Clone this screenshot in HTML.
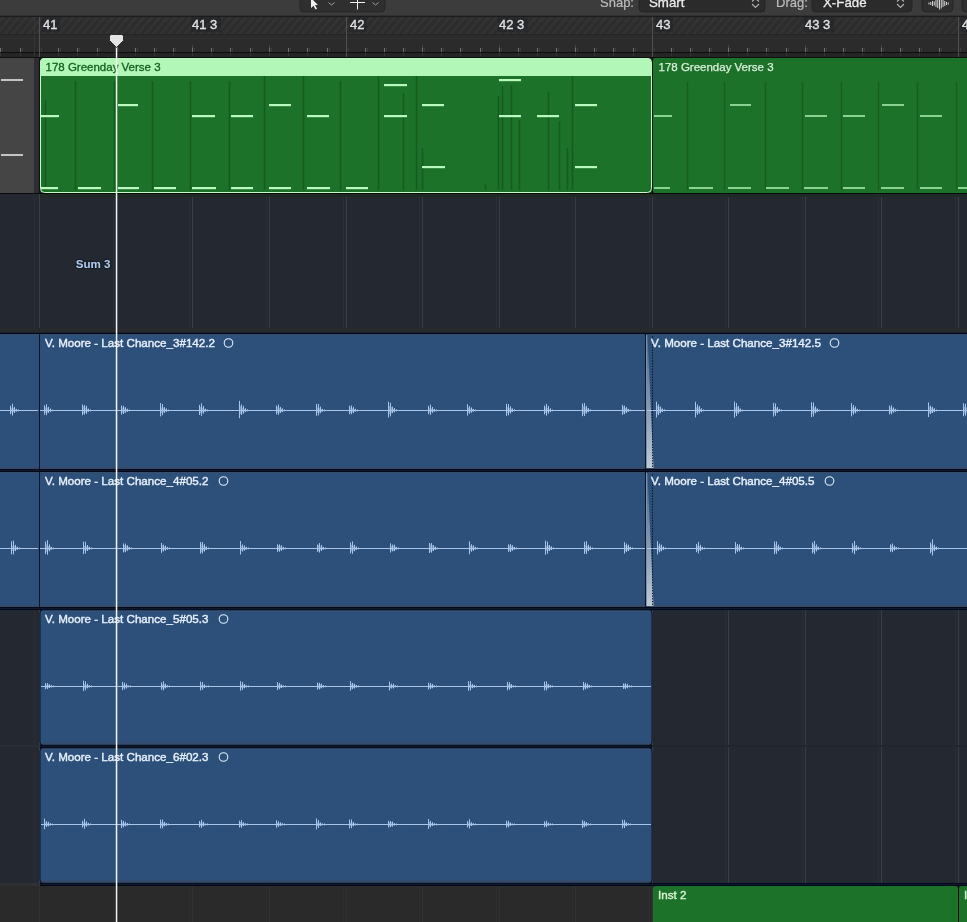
<!DOCTYPE html>
<html><head><meta charset="utf-8"><title>Logic Tracks</title>
<style>
*{margin:0;padding:0;box-sizing:border-box}
html,body{width:967px;height:922px;overflow:hidden;background:#262a31}
body{position:relative;font-family:"Liberation Sans",sans-serif}
svg text{font-family:"Liberation Sans",sans-serif}
</style></head><body>
<svg width="967" height="922" viewBox="0 0 967 922" style="position:absolute;left:0;top:0;display:block;will-change:transform" font-family="Liberation Sans, sans-serif"><rect x="0" y="0" width="967" height="922" fill="#242831" />
<rect x="0" y="0" width="967" height="16" fill="#3c3c3c" />
<rect x="0" y="15" width="967" height="1" fill="#303030" />
<defs><pattern id="st" patternUnits="userSpaceOnUse" width="6" height="9" patternTransform="rotate(40)"><rect width="6" height="9" fill="#2c2c2c"/><rect width="2.6" height="9" fill="#333333"/></pattern><linearGradient id="xf" x1="0" y1="0" x2="0" y2="1"><stop offset="0" stop-color="#a8b6c8" stop-opacity="0.25"/><stop offset="1" stop-color="#c8d0da" stop-opacity="0.95"/></linearGradient></defs>
<rect x="0" y="16" width="967" height="1" fill="#1c1c1c" />
<rect x="0" y="17" width="967" height="17" fill="url(#st)" />
<rect x="0" y="34" width="967" height="1" fill="#232323" />
<rect x="0" y="35" width="967" height="17" fill="#2b2b2b" />
<rect x="0" y="38" width="967" height="1" fill="#303030" />
<rect x="0" y="52" width="967" height="1" fill="#0f0f0f" />
<rect x="0" y="53" width="967" height="4" fill="#232623" />
<rect x="0" y="57" width="967" height="1" fill="#0f0f0f" />
<rect x="0" y="48" width="1" height="4" fill="#707070" />
<rect x="2" y="48" width="1" height="4" fill="#3c3c3c" />
<rect x="0" y="53" width="1" height="3" fill="#363636" />
<rect x="20" y="48" width="1" height="4" fill="#707070" />
<rect x="22" y="48" width="1" height="4" fill="#3c3c3c" />
<rect x="20" y="53" width="1" height="3" fill="#363636" />
<rect x="39" y="45" width="1" height="3" fill="#4a4a4a" />
<rect x="39" y="48" width="1" height="4" fill="#707070" />
<rect x="41" y="48" width="1" height="4" fill="#3c3c3c" />
<rect x="39" y="53" width="1" height="3" fill="#363636" />
<rect x="58" y="48" width="1" height="4" fill="#707070" />
<rect x="60" y="48" width="1" height="4" fill="#3c3c3c" />
<rect x="58" y="53" width="1" height="3" fill="#363636" />
<rect x="77" y="48" width="1" height="4" fill="#707070" />
<rect x="79" y="48" width="1" height="4" fill="#3c3c3c" />
<rect x="77" y="53" width="1" height="3" fill="#363636" />
<rect x="97" y="48" width="1" height="4" fill="#707070" />
<rect x="99" y="48" width="1" height="4" fill="#3c3c3c" />
<rect x="97" y="53" width="1" height="3" fill="#363636" />
<rect x="116" y="45" width="1" height="3" fill="#4a4a4a" />
<rect x="116" y="48" width="1" height="4" fill="#707070" />
<rect x="118" y="48" width="1" height="4" fill="#3c3c3c" />
<rect x="116" y="53" width="1" height="3" fill="#363636" />
<rect x="135" y="48" width="1" height="4" fill="#707070" />
<rect x="137" y="48" width="1" height="4" fill="#3c3c3c" />
<rect x="135" y="53" width="1" height="3" fill="#363636" />
<rect x="154" y="48" width="1" height="4" fill="#707070" />
<rect x="156" y="48" width="1" height="4" fill="#3c3c3c" />
<rect x="154" y="53" width="1" height="3" fill="#363636" />
<rect x="173" y="48" width="1" height="4" fill="#707070" />
<rect x="175" y="48" width="1" height="4" fill="#3c3c3c" />
<rect x="173" y="53" width="1" height="3" fill="#363636" />
<rect x="192" y="45" width="1" height="3" fill="#4a4a4a" />
<rect x="192" y="48" width="1" height="4" fill="#707070" />
<rect x="194" y="48" width="1" height="4" fill="#3c3c3c" />
<rect x="192" y="53" width="1" height="3" fill="#363636" />
<rect x="211" y="48" width="1" height="4" fill="#707070" />
<rect x="213" y="48" width="1" height="4" fill="#3c3c3c" />
<rect x="211" y="53" width="1" height="3" fill="#363636" />
<rect x="230" y="48" width="1" height="4" fill="#707070" />
<rect x="232" y="48" width="1" height="4" fill="#3c3c3c" />
<rect x="230" y="53" width="1" height="3" fill="#363636" />
<rect x="250" y="48" width="1" height="4" fill="#707070" />
<rect x="252" y="48" width="1" height="4" fill="#3c3c3c" />
<rect x="250" y="53" width="1" height="3" fill="#363636" />
<rect x="269" y="45" width="1" height="3" fill="#4a4a4a" />
<rect x="269" y="48" width="1" height="4" fill="#707070" />
<rect x="271" y="48" width="1" height="4" fill="#3c3c3c" />
<rect x="269" y="53" width="1" height="3" fill="#363636" />
<rect x="288" y="48" width="1" height="4" fill="#707070" />
<rect x="290" y="48" width="1" height="4" fill="#3c3c3c" />
<rect x="288" y="53" width="1" height="3" fill="#363636" />
<rect x="307" y="48" width="1" height="4" fill="#707070" />
<rect x="309" y="48" width="1" height="4" fill="#3c3c3c" />
<rect x="307" y="53" width="1" height="3" fill="#363636" />
<rect x="327" y="48" width="1" height="4" fill="#707070" />
<rect x="329" y="48" width="1" height="4" fill="#3c3c3c" />
<rect x="327" y="53" width="1" height="3" fill="#363636" />
<rect x="346" y="45" width="1" height="3" fill="#4a4a4a" />
<rect x="346" y="48" width="1" height="4" fill="#707070" />
<rect x="348" y="48" width="1" height="4" fill="#3c3c3c" />
<rect x="346" y="53" width="1" height="3" fill="#363636" />
<rect x="365" y="48" width="1" height="4" fill="#707070" />
<rect x="367" y="48" width="1" height="4" fill="#3c3c3c" />
<rect x="365" y="53" width="1" height="3" fill="#363636" />
<rect x="384" y="48" width="1" height="4" fill="#707070" />
<rect x="386" y="48" width="1" height="4" fill="#3c3c3c" />
<rect x="384" y="53" width="1" height="3" fill="#363636" />
<rect x="403" y="48" width="1" height="4" fill="#707070" />
<rect x="405" y="48" width="1" height="4" fill="#3c3c3c" />
<rect x="403" y="53" width="1" height="3" fill="#363636" />
<rect x="422" y="45" width="1" height="3" fill="#4a4a4a" />
<rect x="422" y="48" width="1" height="4" fill="#707070" />
<rect x="424" y="48" width="1" height="4" fill="#3c3c3c" />
<rect x="422" y="53" width="1" height="3" fill="#363636" />
<rect x="441" y="48" width="1" height="4" fill="#707070" />
<rect x="443" y="48" width="1" height="4" fill="#3c3c3c" />
<rect x="441" y="53" width="1" height="3" fill="#363636" />
<rect x="460" y="48" width="1" height="4" fill="#707070" />
<rect x="462" y="48" width="1" height="4" fill="#3c3c3c" />
<rect x="460" y="53" width="1" height="3" fill="#363636" />
<rect x="480" y="48" width="1" height="4" fill="#707070" />
<rect x="482" y="48" width="1" height="4" fill="#3c3c3c" />
<rect x="480" y="53" width="1" height="3" fill="#363636" />
<rect x="499" y="45" width="1" height="3" fill="#4a4a4a" />
<rect x="499" y="48" width="1" height="4" fill="#707070" />
<rect x="501" y="48" width="1" height="4" fill="#3c3c3c" />
<rect x="499" y="53" width="1" height="3" fill="#363636" />
<rect x="518" y="48" width="1" height="4" fill="#707070" />
<rect x="520" y="48" width="1" height="4" fill="#3c3c3c" />
<rect x="518" y="53" width="1" height="3" fill="#363636" />
<rect x="537" y="48" width="1" height="4" fill="#707070" />
<rect x="539" y="48" width="1" height="4" fill="#3c3c3c" />
<rect x="537" y="53" width="1" height="3" fill="#363636" />
<rect x="556" y="48" width="1" height="4" fill="#707070" />
<rect x="558" y="48" width="1" height="4" fill="#3c3c3c" />
<rect x="556" y="53" width="1" height="3" fill="#363636" />
<rect x="575" y="45" width="1" height="3" fill="#4a4a4a" />
<rect x="575" y="48" width="1" height="4" fill="#707070" />
<rect x="577" y="48" width="1" height="4" fill="#3c3c3c" />
<rect x="575" y="53" width="1" height="3" fill="#363636" />
<rect x="594" y="48" width="1" height="4" fill="#707070" />
<rect x="596" y="48" width="1" height="4" fill="#3c3c3c" />
<rect x="594" y="53" width="1" height="3" fill="#363636" />
<rect x="613" y="48" width="1" height="4" fill="#707070" />
<rect x="615" y="48" width="1" height="4" fill="#3c3c3c" />
<rect x="613" y="53" width="1" height="3" fill="#363636" />
<rect x="633" y="48" width="1" height="4" fill="#707070" />
<rect x="635" y="48" width="1" height="4" fill="#3c3c3c" />
<rect x="633" y="53" width="1" height="3" fill="#363636" />
<rect x="652" y="45" width="1" height="3" fill="#4a4a4a" />
<rect x="652" y="48" width="1" height="4" fill="#707070" />
<rect x="654" y="48" width="1" height="4" fill="#3c3c3c" />
<rect x="652" y="53" width="1" height="3" fill="#363636" />
<rect x="671" y="48" width="1" height="4" fill="#707070" />
<rect x="673" y="48" width="1" height="4" fill="#3c3c3c" />
<rect x="671" y="53" width="1" height="3" fill="#363636" />
<rect x="690" y="48" width="1" height="4" fill="#707070" />
<rect x="692" y="48" width="1" height="4" fill="#3c3c3c" />
<rect x="690" y="53" width="1" height="3" fill="#363636" />
<rect x="709" y="48" width="1" height="4" fill="#707070" />
<rect x="711" y="48" width="1" height="4" fill="#3c3c3c" />
<rect x="709" y="53" width="1" height="3" fill="#363636" />
<rect x="728" y="45" width="1" height="3" fill="#4a4a4a" />
<rect x="728" y="48" width="1" height="4" fill="#707070" />
<rect x="730" y="48" width="1" height="4" fill="#3c3c3c" />
<rect x="728" y="53" width="1" height="3" fill="#363636" />
<rect x="747" y="48" width="1" height="4" fill="#707070" />
<rect x="749" y="48" width="1" height="4" fill="#3c3c3c" />
<rect x="747" y="53" width="1" height="3" fill="#363636" />
<rect x="766" y="48" width="1" height="4" fill="#707070" />
<rect x="768" y="48" width="1" height="4" fill="#3c3c3c" />
<rect x="766" y="53" width="1" height="3" fill="#363636" />
<rect x="786" y="48" width="1" height="4" fill="#707070" />
<rect x="788" y="48" width="1" height="4" fill="#3c3c3c" />
<rect x="786" y="53" width="1" height="3" fill="#363636" />
<rect x="805" y="45" width="1" height="3" fill="#4a4a4a" />
<rect x="805" y="48" width="1" height="4" fill="#707070" />
<rect x="807" y="48" width="1" height="4" fill="#3c3c3c" />
<rect x="805" y="53" width="1" height="3" fill="#363636" />
<rect x="824" y="48" width="1" height="4" fill="#707070" />
<rect x="826" y="48" width="1" height="4" fill="#3c3c3c" />
<rect x="824" y="53" width="1" height="3" fill="#363636" />
<rect x="843" y="48" width="1" height="4" fill="#707070" />
<rect x="845" y="48" width="1" height="4" fill="#3c3c3c" />
<rect x="843" y="53" width="1" height="3" fill="#363636" />
<rect x="862" y="48" width="1" height="4" fill="#707070" />
<rect x="864" y="48" width="1" height="4" fill="#3c3c3c" />
<rect x="862" y="53" width="1" height="3" fill="#363636" />
<rect x="881" y="45" width="1" height="3" fill="#4a4a4a" />
<rect x="881" y="48" width="1" height="4" fill="#707070" />
<rect x="883" y="48" width="1" height="4" fill="#3c3c3c" />
<rect x="881" y="53" width="1" height="3" fill="#363636" />
<rect x="900" y="48" width="1" height="4" fill="#707070" />
<rect x="902" y="48" width="1" height="4" fill="#3c3c3c" />
<rect x="900" y="53" width="1" height="3" fill="#363636" />
<rect x="919" y="48" width="1" height="4" fill="#707070" />
<rect x="921" y="48" width="1" height="4" fill="#3c3c3c" />
<rect x="919" y="53" width="1" height="3" fill="#363636" />
<rect x="939" y="48" width="1" height="4" fill="#707070" />
<rect x="941" y="48" width="1" height="4" fill="#3c3c3c" />
<rect x="939" y="53" width="1" height="3" fill="#363636" />
<rect x="958" y="45" width="1" height="3" fill="#4a4a4a" />
<rect x="958" y="48" width="1" height="4" fill="#707070" />
<rect x="960" y="48" width="1" height="4" fill="#3c3c3c" />
<rect x="958" y="53" width="1" height="3" fill="#363636" />
<rect x="39" y="17" width="1" height="40" fill="#505050" />
<rect x="346" y="17" width="1" height="40" fill="#505050" />
<rect x="652" y="17" width="1" height="40" fill="#505050" />
<rect x="958" y="17" width="1" height="40" fill="#505050" />
<rect x="34" y="17" width="1" height="40" fill="#333333" />
<rect x="42" y="17" width="18" height="15" fill="#1f2228" opacity="0.5"/>
<text x="43" y="29" font-size="13" fill="#e2e2e2" font-weight="normal" stroke="#e2e2e2" stroke-width="0.35">41</text>
<rect x="191" y="17" width="30" height="15" fill="#1f2228" opacity="0.5"/>
<text x="192" y="29" font-size="13" fill="#e2e2e2" font-weight="normal" stroke="#e2e2e2" stroke-width="0.35">41 3</text>
<rect x="349" y="17" width="18" height="15" fill="#1f2228" opacity="0.5"/>
<text x="350" y="29" font-size="13" fill="#e2e2e2" font-weight="normal" stroke="#e2e2e2" stroke-width="0.35">42</text>
<rect x="498" y="17" width="30" height="15" fill="#1f2228" opacity="0.5"/>
<text x="499" y="29" font-size="13" fill="#e2e2e2" font-weight="normal" stroke="#e2e2e2" stroke-width="0.35">42 3</text>
<rect x="655" y="17" width="18" height="15" fill="#1f2228" opacity="0.5"/>
<text x="656" y="29" font-size="13" fill="#e2e2e2" font-weight="normal" stroke="#e2e2e2" stroke-width="0.35">43</text>
<rect x="804" y="17" width="30" height="15" fill="#1f2228" opacity="0.5"/>
<text x="805" y="29" font-size="13" fill="#e2e2e2" font-weight="normal" stroke="#e2e2e2" stroke-width="0.35">43 3</text>
<rect x="961" y="17" width="12" height="15" fill="#1f2228" opacity="0.5"/>
<text x="962" y="29" font-size="13" fill="#e2e2e2" font-weight="normal" stroke="#e2e2e2" stroke-width="0.35">4</text>
<rect x="39" y="194" width="1" height="728" fill="#393d45" />
<rect x="116" y="194" width="1" height="728" fill="#393d45" />
<rect x="113" y="194" width="1" height="728" fill="#2a2e36" />
<rect x="192" y="194" width="1" height="728" fill="#393d45" />
<rect x="189" y="194" width="1" height="728" fill="#2a2e36" />
<rect x="269" y="194" width="1" height="728" fill="#393d45" />
<rect x="266" y="194" width="1" height="728" fill="#2a2e36" />
<rect x="346" y="194" width="1" height="728" fill="#393d45" />
<rect x="343" y="194" width="1" height="728" fill="#2a2e36" />
<rect x="422" y="194" width="1" height="728" fill="#393d45" />
<rect x="419" y="194" width="1" height="728" fill="#2a2e36" />
<rect x="499" y="194" width="1" height="728" fill="#393d45" />
<rect x="496" y="194" width="1" height="728" fill="#2a2e36" />
<rect x="575" y="194" width="1" height="728" fill="#393d45" />
<rect x="572" y="194" width="1" height="728" fill="#2a2e36" />
<rect x="652" y="194" width="1" height="728" fill="#393d45" />
<rect x="649" y="194" width="1" height="728" fill="#2a2e36" />
<rect x="728" y="194" width="1" height="728" fill="#393d45" />
<rect x="725" y="194" width="1" height="728" fill="#2a2e36" />
<rect x="805" y="194" width="1" height="728" fill="#393d45" />
<rect x="802" y="194" width="1" height="728" fill="#2a2e36" />
<rect x="881" y="194" width="1" height="728" fill="#393d45" />
<rect x="878" y="194" width="1" height="728" fill="#2a2e36" />
<rect x="958" y="194" width="1" height="728" fill="#393d45" />
<rect x="955" y="194" width="1" height="728" fill="#2a2e36" />
<rect x="34" y="194" width="1" height="728" fill="#2c2d33" />
<rect x="0" y="193" width="967" height="1" fill="#0a0a0a" />
<rect x="40" y="194" width="927" height="3" fill="#1f2a24" />
<rect x="0" y="328" width="967" height="4" fill="#28292c" />
<rect x="0" y="332" width="967" height="1" fill="#1a2230" />
<rect x="0" y="333" width="967" height="1" fill="#000818" />
<rect x="0" y="469" width="967" height="1" fill="#000a1c" />
<rect x="0" y="470" width="967" height="1" fill="#111a2c" />
<rect x="0" y="471" width="967" height="1" fill="#000a1c" />
<rect x="0" y="607" width="967" height="1" fill="#000a1c" />
<rect x="0" y="608" width="967" height="1" fill="#111a2c" />
<rect x="0" y="609" width="967" height="1" fill="#000a1c" />
<rect x="40" y="745" width="612" height="1" fill="#000a1c" />
<rect x="40" y="746" width="612" height="1" fill="#111a2c" />
<rect x="40" y="747" width="612" height="1" fill="#000a1c" />
<rect x="40" y="883" width="927" height="1" fill="#000a1c" />
<rect x="40" y="884" width="927" height="1" fill="#111a2c" />
<rect x="40" y="885" width="927" height="1" fill="#000a1c" />
<rect x="0" y="745" width="40" height="2" fill="#2b2e35" />
<rect x="652" y="745" width="315" height="2" fill="#22252b" />
<rect x="0" y="883" width="40" height="3" fill="#2e3036" />
<rect x="0" y="886" width="967" height="36" fill="#2a2a2b" />
<rect x="39" y="886" width="1" height="36" fill="#323232" />
<rect x="116" y="886" width="1" height="36" fill="#323232" />
<rect x="113" y="886" width="1" height="36" fill="#2a2e36" />
<rect x="192" y="886" width="1" height="36" fill="#323232" />
<rect x="189" y="886" width="1" height="36" fill="#2a2e36" />
<rect x="269" y="886" width="1" height="36" fill="#323232" />
<rect x="266" y="886" width="1" height="36" fill="#2a2e36" />
<rect x="346" y="886" width="1" height="36" fill="#323232" />
<rect x="343" y="886" width="1" height="36" fill="#2a2e36" />
<rect x="422" y="886" width="1" height="36" fill="#323232" />
<rect x="419" y="886" width="1" height="36" fill="#2a2e36" />
<rect x="499" y="886" width="1" height="36" fill="#323232" />
<rect x="496" y="886" width="1" height="36" fill="#2a2e36" />
<rect x="575" y="886" width="1" height="36" fill="#323232" />
<rect x="572" y="886" width="1" height="36" fill="#2a2e36" />
<rect x="652" y="886" width="1" height="36" fill="#323232" />
<rect x="649" y="886" width="1" height="36" fill="#2a2e36" />
<rect x="728" y="886" width="1" height="36" fill="#323232" />
<rect x="725" y="886" width="1" height="36" fill="#2a2e36" />
<rect x="805" y="886" width="1" height="36" fill="#323232" />
<rect x="802" y="886" width="1" height="36" fill="#2a2e36" />
<rect x="881" y="886" width="1" height="36" fill="#323232" />
<rect x="878" y="886" width="1" height="36" fill="#2a2e36" />
<rect x="958" y="886" width="1" height="36" fill="#323232" />
<rect x="955" y="886" width="1" height="36" fill="#2a2e36" />
<rect x="0" y="58" width="34" height="135" fill="#454545" />
<rect x="34" y="58" width="5" height="135" fill="#2e2c32" />
<rect x="39" y="58" width="1" height="135" fill="#101010" />
<rect x="1" y="79" width="22" height="2" fill="#c4c4c4" />
<rect x="1" y="154" width="22" height="2" fill="#c4c4c4" />
<rect x="40.5" y="58.5" width="611" height="134" rx="4" fill="#1c7229" stroke="#c4fcc8" stroke-width="1"/>
<path d="M40 76 V62.5 a4.5 4.5 0 0 1 4.5 -4.5 H647 a4.5 4.5 0 0 1 4.5 4.5 V76 Z" fill="#b3f7b8"/>
<text x="45.5" y="70.8" font-size="11.5" fill="#12601f" font-weight="normal" stroke="#12601f" stroke-width="0.3">178 Greenday Verse 3</text>
<rect x="44.75" y="100" width="1.5" height="90" fill="#175a21" />
<rect x="74.75" y="81" width="1.5" height="109" fill="#175a21" />
<rect x="113.75" y="81" width="1.5" height="109" fill="#175a21" />
<rect x="151.75" y="81" width="1.5" height="109" fill="#175a21" />
<rect x="189.75" y="81" width="1.5" height="109" fill="#175a21" />
<rect x="228.75" y="81" width="1.5" height="109" fill="#175a21" />
<rect x="263.75" y="76" width="1.5" height="114" fill="#175a21" />
<rect x="302.75" y="76" width="1.5" height="114" fill="#175a21" />
<rect x="339.75" y="81" width="1.5" height="109" fill="#175a21" />
<rect x="377.75" y="76" width="1.5" height="114" fill="#175a21" />
<rect x="402.75" y="93" width="1.5" height="97" fill="#175a21" />
<rect x="415.75" y="76" width="1.5" height="114" fill="#175a21" />
<rect x="421.75" y="148" width="1.5" height="42" fill="#175a21" />
<rect x="484.75" y="184" width="1.5" height="6" fill="#175a21" />
<rect x="497.75" y="96" width="1.5" height="94" fill="#175a21" />
<rect x="501.75" y="86" width="1.5" height="104" fill="#175a21" />
<rect x="510.75" y="85" width="1.5" height="105" fill="#175a21" />
<rect x="518.75" y="120" width="1.5" height="70" fill="#175a21" />
<rect x="547.75" y="92" width="1.5" height="98" fill="#175a21" />
<rect x="558.75" y="121" width="1.5" height="69" fill="#175a21" />
<rect x="566.75" y="148" width="1.5" height="42" fill="#175a21" />
<rect x="571.75" y="76" width="1.5" height="114" fill="#175a21" />
<rect x="41" y="115" width="18" height="2.2" fill="#b9f8bf" />
<rect x="41" y="187" width="17" height="2.2" fill="#b9f8bf" />
<rect x="78" y="187" width="23" height="2.2" fill="#b9f8bf" />
<rect x="118" y="187" width="21" height="2.2" fill="#b9f8bf" />
<rect x="154" y="187" width="22" height="2.2" fill="#b9f8bf" />
<rect x="192" y="187" width="24" height="2.2" fill="#b9f8bf" />
<rect x="231" y="187" width="22" height="2.2" fill="#b9f8bf" />
<rect x="269" y="187" width="22" height="2.2" fill="#b9f8bf" />
<rect x="307" y="187" width="23" height="2.2" fill="#b9f8bf" />
<rect x="346" y="187" width="22" height="2.2" fill="#b9f8bf" />
<rect x="118" y="104" width="20" height="2.2" fill="#b9f8bf" />
<rect x="192" y="115" width="23" height="2.2" fill="#b9f8bf" />
<rect x="231" y="115" width="22" height="2.2" fill="#b9f8bf" />
<rect x="269" y="104" width="22" height="2.2" fill="#b9f8bf" />
<rect x="307" y="115" width="22" height="2.2" fill="#b9f8bf" />
<rect x="384" y="84" width="23" height="2.2" fill="#b9f8bf" />
<rect x="384" y="115" width="23" height="2.2" fill="#b9f8bf" />
<rect x="422" y="104" width="22" height="2.2" fill="#b9f8bf" />
<rect x="422" y="166" width="23" height="2.2" fill="#b9f8bf" />
<rect x="499" y="79" width="22" height="2.2" fill="#b9f8bf" />
<rect x="499" y="115" width="22" height="2.2" fill="#b9f8bf" />
<rect x="537" y="115" width="22" height="2.2" fill="#b9f8bf" />
<rect x="575" y="104" width="22" height="2.2" fill="#b9f8bf" />
<rect x="575" y="166" width="22" height="2.2" fill="#b9f8bf" />
<rect x="652" y="58" width="1" height="135" fill="#0a0f0a" />
<rect x="653" y="58" width="330" height="135" rx="2.5" fill="#1c7229"/>
<text x="658.5" y="70.8" font-size="11.5" fill="#dcf0dc" font-weight="normal" stroke="#dcf0dc" stroke-width="0.25">178 Greenday Verse 3</text>
<rect x="686.75" y="82" width="1.5" height="108" fill="#185c22" />
<rect x="723.75" y="82" width="1.5" height="108" fill="#185c22" />
<rect x="764.75" y="82" width="1.5" height="108" fill="#185c22" />
<rect x="801.75" y="82" width="1.5" height="108" fill="#185c22" />
<rect x="840.75" y="82" width="1.5" height="108" fill="#185c22" />
<rect x="877.75" y="82" width="1.5" height="108" fill="#185c22" />
<rect x="916.75" y="82" width="1.5" height="108" fill="#185c22" />
<rect x="955.75" y="82" width="1.5" height="108" fill="#185c22" />
<rect x="654" y="115" width="18" height="2" fill="#8ad292" />
<rect x="805" y="115" width="22" height="2" fill="#8ad292" />
<rect x="843" y="115" width="22" height="2" fill="#8ad292" />
<rect x="920" y="115" width="22" height="2" fill="#8ad292" />
<rect x="730" y="104" width="21" height="2" fill="#8ad292" />
<rect x="882" y="104" width="22" height="2" fill="#8ad292" />
<rect x="654" y="187" width="16" height="2" fill="#8ad292" />
<rect x="689" y="187" width="24" height="2" fill="#8ad292" />
<rect x="728" y="187" width="23" height="2" fill="#8ad292" />
<rect x="766" y="187" width="23" height="2" fill="#8ad292" />
<rect x="804" y="187" width="24" height="2" fill="#8ad292" />
<rect x="843" y="187" width="22" height="2" fill="#8ad292" />
<rect x="881" y="187" width="23" height="2" fill="#8ad292" />
<rect x="920" y="187" width="22" height="2" fill="#8ad292" />
<rect x="958" y="187" width="17" height="2" fill="#8ad292" />
<text x="110.5" y="268" font-size="11.6" fill="#1b1f28" font-weight="bold" text-anchor="end" stroke="#1b1f28" stroke-width="3" stroke-linejoin="round" opacity="0.8">Sum 3</text>
<text x="110.5" y="268" font-size="11.6" fill="#aecdf3" font-weight="bold" text-anchor="end">Sum 3</text>
<rect x="0" y="334" width="39" height="135" fill="#2c5079" />
<rect x="39" y="334" width="1" height="135" fill="#0a1428" />
<rect x="40" y="334" width="605" height="135" rx="3" fill="#2c5079"/>
<rect x="645" y="334" width="1" height="135" fill="#0a1428" />
<rect x="646" y="334" width="330" height="135" rx="3" fill="#2c5079"/>
<rect x="0" y="334" width="39" height="1" fill="#3a4e6a" />
<rect x="0" y="467" width="39" height="2" fill="#384a66" />
<rect x="40" y="334" width="605" height="1" fill="#3a4e6a" />
<rect x="40" y="467" width="605" height="2" fill="#384a66" />
<rect x="646" y="334" width="321" height="1" fill="#3a4e6a" />
<rect x="646" y="467" width="321" height="2" fill="#384a66" />
<path d="M0 410.5H38M10.5 405.8V414.2M12.5 403.7V415.6M14.5 406.9V413.0M16.5 408.9V411.7M18.5 409.5V411.3" stroke="#a9c6ea" stroke-width="1" fill="none"/>
<path d="M11.5 407.8V412.7M13.5 407.9V412.5M15.5 409.3V411.5M19.5 410.5H23.5" stroke="#a9c6ea" stroke-width="1" fill="none" opacity="0.5"/>
<path d="M40 410.5H645M44.5 405.3V414.7M46.5 404.3V415.2M48.5 406.9V413.0M50.5 408.5V411.9M52.5 409.5V411.3M82.5 404.5V415.3M84.5 405.1V414.6M86.5 405.8V413.8M88.5 408.6V411.9M90.5 409.4V411.3M121.5 405.6V414.5M123.5 405.8V414.0M125.5 407.2V412.8M127.5 408.7V411.8M129.5 409.5V411.3M160.5 403.1V416.4M162.5 404.0V415.4M164.5 407.1V412.9M166.5 408.4V412.0M168.5 409.5V411.3M199.5 404.9V415.0M201.5 403.3V415.9M203.5 406.1V413.6M205.5 408.6V411.8M207.5 409.5V411.3M239.5 400.8V418.2M241.5 404.4V415.0M243.5 405.9V413.7M245.5 408.3V412.1M247.5 409.3V411.3M276.5 405.6V414.4M278.5 404.6V414.9M280.5 406.9V413.0M282.5 408.3V412.1M284.5 409.5V411.3M316.5 403.9V415.8M318.5 404.0V415.4M320.5 406.6V413.2M322.5 408.9V411.7M324.5 409.5V411.3M349.5 405.7V414.3M351.5 405.5V414.2M353.5 406.8V413.1M355.5 408.8V411.7M357.5 409.5V411.3M388.5 401.7V417.5M390.5 402.8V416.3M392.5 406.7V413.2M394.5 408.0V412.3M396.5 409.4V411.3M428.5 405.9V414.2M430.5 404.6V414.9M432.5 407.0V412.9M434.5 408.8V411.7M436.5 409.5V411.3M467.5 404.2V415.6M469.5 406.1V413.8M471.5 407.4V412.7M473.5 408.9V411.7M475.5 409.5V411.3M506.5 403.8V415.9M508.5 404.1V415.3M510.5 406.3V413.5M512.5 408.4V412.0M514.5 409.3V411.3M544.5 405.6V414.4M546.5 403.8V415.6M548.5 406.0V413.7M550.5 408.3V412.1M552.5 409.5V411.3M582.5 403.4V416.2M584.5 403.1V416.0M586.5 405.9V413.7M588.5 408.1V412.2M590.5 409.4V411.3M622.5 405.0V414.9M624.5 405.7V414.1M626.5 407.1V412.9M628.5 408.8V411.7M630.5 409.5V411.3" stroke="#a9c6ea" stroke-width="1" fill="none"/>
<path d="M45.5 407.5V412.9M47.5 407.6V412.8M49.5 409.4V411.4M53.5 410.5H57.5M83.5 406.4V413.8M85.5 407.6V412.8M87.5 408.7V411.9M91.5 410.5H95.5M122.5 407.6V412.8M124.5 407.8V412.7M126.5 409.0V411.7M130.5 410.5H134.5M161.5 407.3V413.0M163.5 407.7V412.8M165.5 409.2V411.5M169.5 410.5H173.5M200.5 406.8V413.4M202.5 407.7V412.8M204.5 409.0V411.7M208.5 410.5H212.5M240.5 406.1V414.0M242.5 407.8V412.7M244.5 408.9V411.8M248.5 410.5H252.5M277.5 407.2V413.2M279.5 407.7V412.7M281.5 408.6V412.0M285.5 410.5H289.5M317.5 407.5V412.9M319.5 407.7V412.8M321.5 408.9V411.8M325.5 410.5H329.5M350.5 407.4V413.0M352.5 408.1V412.4M354.5 409.0V411.7M358.5 410.5H362.5M389.5 405.9V414.2M391.5 407.0V413.3M393.5 408.8V411.9M397.5 410.5H401.5M429.5 407.7V412.8M431.5 408.4V412.2M433.5 409.2V411.6M437.5 410.5H441.5M468.5 407.5V412.9M470.5 408.4V412.2M472.5 408.9V411.8M476.5 410.5H480.5M507.5 407.0V413.3M509.5 408.0V412.5M511.5 408.4V412.2M515.5 410.5H519.5M545.5 407.3V413.1M547.5 407.9V412.6M549.5 409.1V411.6M553.5 410.5H557.5M583.5 406.2V413.9M585.5 407.2V413.2M587.5 408.6V412.0M591.5 410.5H595.5M623.5 406.6V413.6M625.5 408.0V412.5M627.5 408.8V411.9M631.5 410.5H635.5" stroke="#a9c6ea" stroke-width="1" fill="none" opacity="0.5"/>
<path d="M646 410.5H967M656.5 401.7V417.5M658.5 404.3V415.2M660.5 406.5V413.3M662.5 408.5V412.0M664.5 409.4V411.3M695.5 401.8V417.4M697.5 404.6V414.9M699.5 406.1V413.6M701.5 408.3V412.1M703.5 409.5V411.3M734.5 401.5V417.7M736.5 403.0V416.1M738.5 406.0V413.7M740.5 408.6V411.9M742.5 409.5V411.3M773.5 402.9V416.6M775.5 403.4V415.8M777.5 406.9V413.0M779.5 408.9V411.6M781.5 409.5V411.3M811.5 402.3V417.0M813.5 402.5V416.5M815.5 406.4V413.3M817.5 408.4V412.0M819.5 409.5V411.3M851.5 403.1V416.4M853.5 405.0V414.6M855.5 406.5V413.3M857.5 408.8V411.7M859.5 409.5V411.3M889.5 405.6V414.4M891.5 405.4V414.3M893.5 407.4V412.7M895.5 408.8V411.7M897.5 409.5V411.3M928.5 402.4V417.0M930.5 405.7V414.1M932.5 406.8V413.1M934.5 408.3V412.1M936.5 409.5V411.3M963.5 403.3V416.3M965.5 403.7V415.6M967.5 406.7V413.2M969.5 408.5V411.9M971.5 409.5V411.3" stroke="#a9c6ea" stroke-width="1" fill="none"/>
<path d="M657.5 405.9V414.2M659.5 407.0V413.3M661.5 408.7V411.9M665.5 410.5H669.5M696.5 407.3V413.1M698.5 407.3V413.1M700.5 409.0V411.7M704.5 410.5H708.5M735.5 407.2V413.1M737.5 407.0V413.3M739.5 408.6V412.0M743.5 410.5H747.5M774.5 406.7V413.5M776.5 407.9V412.6M778.5 409.1V411.6M782.5 410.5H786.5M812.5 406.4V413.8M814.5 407.7V412.7M816.5 408.8V411.9M820.5 410.5H824.5M852.5 407.3V413.0M854.5 408.0V412.5M856.5 409.1V411.6M860.5 410.5H864.5M890.5 407.4V413.0M892.5 408.3V412.3M894.5 409.1V411.6M898.5 410.5H902.5M929.5 406.8V413.4M931.5 407.4V413.0M933.5 408.6V412.0M937.5 410.5H941.5M964.5 406.4V413.8M966.5 407.6V412.8M968.5 408.7V411.9M972.5 410.5H976.5" stroke="#a9c6ea" stroke-width="1" fill="none" opacity="0.5"/>
<path d="M646 335 L647.5 335 L653.5 468 L646 468 Z" fill="url(#xf)"/>
<rect x="646" y="335" width="1" height="133" fill="#7d92ae" />
<line x1="652.5" y1="336" x2="652.5" y2="467" stroke="#07101f" stroke-width="1" stroke-dasharray="1.3 1.4"/>
<text x="45" y="347" font-size="11.62" fill="#e8f0fb" font-weight="normal" stroke="#e8f0fb" stroke-width="0.4">V. Moore - Last Chance_3#142.2</text>
<circle cx="228.5" cy="343" r="4.3" fill="none" stroke="#e4edf9" stroke-width="1.1"/>
<text x="651" y="347" font-size="11.62" fill="#e8f0fb" font-weight="normal" stroke="#e8f0fb" stroke-width="0.4">V. Moore - Last Chance_3#142.5</text>
<circle cx="834.5" cy="343" r="4.3" fill="none" stroke="#e4edf9" stroke-width="1.1"/>
<rect x="0" y="472" width="39" height="135" fill="#2c5079" />
<rect x="39" y="472" width="1" height="135" fill="#0a1428" />
<rect x="40" y="472" width="605" height="135" rx="3" fill="#2c5079"/>
<rect x="645" y="472" width="1" height="135" fill="#0a1428" />
<rect x="646" y="472" width="330" height="135" rx="3" fill="#2c5079"/>
<rect x="0" y="472" width="39" height="1" fill="#3a4e6a" />
<rect x="0" y="605" width="39" height="2" fill="#384a66" />
<rect x="40" y="472" width="605" height="1" fill="#3a4e6a" />
<rect x="40" y="605" width="605" height="2" fill="#384a66" />
<rect x="646" y="472" width="321" height="1" fill="#3a4e6a" />
<rect x="646" y="605" width="321" height="2" fill="#384a66" />
<path d="M0 548.5H38M11.5 541.3V554.3M13.5 540.7V554.3M15.5 544.8V551.1M17.5 546.7V549.8M19.5 547.5V549.3" stroke="#a9c6ea" stroke-width="1" fill="none"/>
<path d="M12.5 545.4V551.0M14.5 545.9V550.6M16.5 547.1V549.6M20.5 548.5H24.5" stroke="#a9c6ea" stroke-width="1" fill="none" opacity="0.5"/>
<path d="M40 548.5H645M45.5 541.5V554.1M47.5 540.2V554.7M49.5 544.4V551.3M51.5 546.8V549.7M53.5 547.5V549.3M83.5 541.6V554.0M85.5 541.7V553.6M87.5 545.0V551.0M89.5 546.7V549.8M91.5 547.5V549.3M123.5 543.5V552.5M125.5 543.6V552.2M127.5 545.2V550.8M129.5 546.9V549.7M131.5 547.5V549.3M161.5 543.0V552.9M163.5 544.7V551.4M165.5 545.6V550.6M167.5 546.9V549.7M169.5 547.5V549.3M200.5 541.9V553.7M202.5 542.0V553.4M204.5 544.1V551.5M206.5 546.5V549.9M208.5 547.5V549.3M240.5 541.0V554.5M242.5 544.4V551.6M244.5 545.4V550.7M246.5 546.8V549.7M248.5 547.5V549.3M277.5 544.3V551.8M279.5 544.3V551.7M281.5 545.3V550.8M283.5 546.9V549.7M285.5 547.5V549.3M317.5 544.5V551.7M319.5 543.1V552.6M321.5 544.9V551.0M323.5 546.9V549.7M325.5 547.5V549.3M350.5 542.4V553.4M352.5 541.4V553.8M354.5 544.7V551.2M356.5 546.4V550.0M358.5 547.5V549.3M390.5 543.3V552.6M392.5 544.6V551.4M394.5 544.6V551.2M396.5 546.8V549.7M398.5 547.5V549.3M429.5 542.9V553.0M431.5 543.1V552.6M433.5 545.0V550.9M435.5 546.6V549.9M437.5 547.5V549.3M469.5 541.4V554.2M471.5 544.2V551.7M473.5 545.2V550.8M475.5 546.8V549.7M477.5 547.5V549.3M508.5 544.4V551.8M510.5 543.9V552.0M512.5 545.2V550.8M514.5 546.9V549.6M516.5 547.5V549.3M545.5 540.7V554.7M547.5 541.5V553.7M549.5 545.0V551.0M551.5 546.4V550.0M553.5 547.5V549.3M584.5 541.8V553.9M586.5 541.1V554.1M588.5 544.7V551.2M590.5 546.4V550.0M592.5 547.5V549.3M624.5 542.1V553.6M626.5 543.6V552.1M628.5 544.8V551.1M630.5 546.8V549.7M632.5 547.5V549.3" stroke="#a9c6ea" stroke-width="1" fill="none"/>
<path d="M46.5 544.4V551.8M48.5 546.1V550.4M50.5 546.7V550.0M54.5 548.5H58.5M84.5 545.7V550.8M86.5 546.2V550.4M88.5 546.9V549.8M92.5 548.5H96.5M124.5 545.0V551.3M126.5 546.0V550.5M128.5 547.0V549.7M132.5 548.5H136.5M162.5 545.1V551.2M164.5 546.4V550.2M166.5 547.4V549.4M170.5 548.5H174.5M201.5 544.1V552.0M203.5 545.5V550.9M205.5 546.7V550.0M209.5 548.5H213.5M241.5 545.8V550.6M243.5 546.5V550.1M245.5 547.2V549.6M249.5 548.5H253.5M278.5 545.7V550.8M280.5 546.1V550.4M282.5 547.3V549.5M286.5 548.5H290.5M318.5 544.8V551.5M320.5 546.4V550.2M322.5 546.9V549.8M326.5 548.5H330.5M351.5 544.8V551.5M353.5 545.7V550.7M355.5 547.0V549.7M359.5 548.5H363.5M391.5 545.8V550.7M393.5 545.6V550.8M395.5 546.8V549.8M399.5 548.5H403.5M430.5 544.4V551.8M432.5 545.3V551.1M434.5 546.9V549.8M438.5 548.5H442.5M470.5 545.8V550.7M472.5 546.1V550.4M474.5 547.4V549.4M478.5 548.5H482.5M509.5 545.3V551.0M511.5 545.8V550.6M513.5 547.0V549.7M517.5 548.5H521.5M546.5 545.6V550.8M548.5 545.4V551.0M550.5 546.7V549.9M554.5 548.5H558.5M585.5 544.6V551.6M587.5 545.7V550.7M589.5 546.7V549.9M593.5 548.5H597.5M625.5 544.9V551.4M627.5 545.6V550.8M629.5 546.9V549.8M633.5 548.5H637.5" stroke="#a9c6ea" stroke-width="1" fill="none" opacity="0.5"/>
<path d="M646 548.5H967M657.5 541.1V554.4M659.5 543.5V552.3M661.5 544.6V551.2M663.5 546.5V549.9M665.5 547.5V549.3M696.5 543.9V552.2M698.5 542.0V553.4M700.5 544.8V551.1M702.5 546.9V549.7M704.5 547.5V549.3M735.5 542.1V553.6M737.5 544.0V551.9M739.5 544.4V551.4M741.5 546.7V549.8M743.5 547.5V549.3M774.5 541.5V554.1M776.5 541.5V553.8M778.5 544.7V551.2M780.5 546.6V549.9M782.5 547.5V549.3M812.5 542.5V553.3M814.5 540.9V554.2M816.5 544.4V551.4M818.5 546.6V549.9M820.5 547.5V549.3M852.5 543.2V552.7M854.5 541.0V554.2M856.5 545.1V550.8M858.5 546.6V549.8M860.5 547.5V549.3M890.5 544.4V551.8M892.5 543.5V552.2M894.5 545.6V550.5M896.5 547.0V549.6M898.5 547.5V549.3M930.5 542.4V553.3M932.5 539.3V555.4M934.5 544.7V551.1M936.5 546.6V549.9M938.5 547.5V549.3" stroke="#a9c6ea" stroke-width="1" fill="none"/>
<path d="M658.5 545.6V550.8M660.5 545.5V550.9M662.5 547.1V549.6M666.5 548.5H670.5M697.5 545.6V550.8M699.5 546.0V550.5M701.5 547.1V549.7M705.5 548.5H709.5M736.5 545.7V550.7M738.5 546.3V550.3M740.5 547.1V549.6M744.5 548.5H748.5M775.5 544.5V551.7M777.5 546.1V550.4M779.5 546.7V550.0M783.5 548.5H787.5M813.5 544.1V552.0M815.5 545.9V550.5M817.5 546.8V549.9M821.5 548.5H825.5M853.5 545.8V550.6M855.5 545.8V550.7M857.5 547.2V549.6M861.5 548.5H865.5M891.5 545.2V551.1M893.5 546.7V549.9M895.5 547.1V549.6M899.5 548.5H903.5M931.5 544.1V552.0M933.5 545.6V550.8M935.5 547.0V549.7M939.5 548.5H943.5" stroke="#a9c6ea" stroke-width="1" fill="none" opacity="0.5"/>
<path d="M646 473 L647.5 473 L653.5 606 L646 606 Z" fill="url(#xf)"/>
<rect x="646" y="473" width="1" height="133" fill="#7d92ae" />
<line x1="652.5" y1="474" x2="652.5" y2="605" stroke="#07101f" stroke-width="1" stroke-dasharray="1.3 1.4"/>
<text x="45" y="485" font-size="11.62" fill="#e8f0fb" font-weight="normal" stroke="#e8f0fb" stroke-width="0.4">V. Moore - Last Chance_4#05.2</text>
<circle cx="223.5" cy="481" r="4.3" fill="none" stroke="#e4edf9" stroke-width="1.1"/>
<text x="651" y="485" font-size="11.62" fill="#e8f0fb" font-weight="normal" stroke="#e8f0fb" stroke-width="0.4">V. Moore - Last Chance_4#05.5</text>
<circle cx="829.5" cy="481" r="4.3" fill="none" stroke="#e4edf9" stroke-width="1.1"/>
<rect x="40" y="610" width="612" height="135" rx="3" fill="#2c5079" stroke="#0a1428" stroke-width="1"/>
<rect x="42" y="610.5" width="608" height="1" fill="#3a4e6a" />
<rect x="42" y="742.5" width="608" height="2" fill="#384a66" />
<path d="M41 686.5H651M45.5 683.1V689.2M47.5 683.1V689.1M49.5 684.2V688.1M51.5 685.1V687.5M53.5 685.5V687.3M83.5 680.7V691.1M85.5 681.4V690.3M87.5 683.7V688.4M89.5 685.1V687.5M91.5 685.5V687.3M122.5 681.9V690.2M124.5 682.6V689.4M126.5 683.7V688.5M128.5 685.4V687.3M130.5 685.5V687.3M161.5 682.4V689.8M163.5 681.3V690.4M165.5 683.7V688.4M167.5 685.2V687.4M169.5 685.5V687.3M200.5 681.6V690.4M202.5 682.1V689.8M204.5 684.4V688.0M206.5 685.5V687.3M208.5 685.5V687.3M240.5 681.2V690.7M242.5 681.8V690.0M244.5 683.9V688.3M246.5 685.3V687.4M248.5 685.5V687.3M277.5 682.1V690.1M279.5 682.8V689.3M281.5 684.4V688.0M283.5 685.4V687.3M285.5 685.5V687.3M317.5 682.6V689.6M319.5 682.7V689.4M321.5 683.7V688.4M323.5 685.1V687.5M325.5 685.5V687.3M350.5 681.1V690.8M352.5 682.9V689.2M354.5 683.7V688.5M356.5 685.0V687.6M358.5 685.5V687.3M389.5 681.6V690.4M391.5 683.6V688.6M393.5 683.7V688.5M395.5 685.2V687.4M397.5 685.5V687.3M428.5 682.7V689.5M430.5 683.0V689.1M432.5 683.9V688.3M434.5 685.3V687.4M436.5 685.5V687.3M468.5 681.2V690.8M470.5 681.2V690.4M472.5 683.9V688.3M474.5 684.9V687.7M476.5 685.5V687.3M507.5 681.8V690.3M509.5 682.2V689.7M511.5 684.1V688.2M513.5 685.4V687.3M515.5 685.5V687.3M544.5 681.6V690.4M546.5 681.3V690.4M548.5 683.9V688.3M550.5 685.0V687.6M552.5 685.5V687.3M583.5 681.9V690.2M585.5 682.7V689.4M587.5 683.5V688.6M589.5 684.9V687.7M591.5 685.5V687.3M623.5 683.5V688.9M625.5 683.3V688.9M627.5 683.9V688.3M629.5 685.3V687.4M631.5 685.5V687.3" stroke="#a9c6ea" stroke-width="1" fill="none"/>
<path d="M46.5 684.5V688.1M48.5 684.7V687.9M50.5 685.6V687.2M54.5 686.5H58.5M84.5 684.1V688.4M86.5 685.1V687.6M88.5 685.4V687.4M92.5 686.5H96.5M123.5 684.4V688.2M125.5 684.9V687.8M127.5 685.4V687.4M131.5 686.5H135.5M162.5 684.2V688.3M164.5 684.2V688.4M166.5 685.4V687.4M170.5 686.5H174.5M201.5 684.7V687.9M203.5 685.0V687.7M205.5 685.7V687.2M209.5 686.5H213.5M241.5 684.6V688.0M243.5 684.8V687.8M245.5 685.3V687.5M249.5 686.5H253.5M278.5 684.5V688.1M280.5 684.6V688.0M282.5 685.5V687.3M286.5 686.5H290.5M318.5 684.1V688.4M320.5 684.2V688.3M322.5 685.2V687.5M326.5 686.5H330.5M351.5 683.8V688.7M353.5 684.4V688.2M355.5 685.3V687.5M359.5 686.5H363.5M390.5 684.6V688.0M392.5 684.9V687.8M394.5 685.4V687.3M398.5 686.5H402.5M429.5 684.6V688.1M431.5 684.8V687.9M433.5 685.4V687.3M437.5 686.5H441.5M469.5 684.1V688.4M471.5 684.9V687.8M473.5 685.4V687.4M477.5 686.5H481.5M508.5 684.2V688.4M510.5 684.5V688.1M512.5 685.6V687.2M516.5 686.5H520.5M545.5 684.3V688.3M547.5 684.4V688.2M549.5 685.5V687.3M553.5 686.5H557.5M584.5 684.0V688.5M586.5 684.7V687.9M588.5 685.1V687.6M592.5 686.5H596.5M624.5 684.1V688.4M626.5 685.0V687.7M628.5 685.7V687.1M632.5 686.5H636.5" stroke="#a9c6ea" stroke-width="1" fill="none" opacity="0.5"/>
<text x="45" y="623" font-size="11.62" fill="#e8f0fb" font-weight="normal" stroke="#e8f0fb" stroke-width="0.4">V. Moore - Last Chance_5#05.3</text>
<circle cx="223.5" cy="619" r="4.3" fill="none" stroke="#e4edf9" stroke-width="1.1"/>
<rect x="40" y="748" width="612" height="135" rx="3" fill="#2c5079" stroke="#0a1428" stroke-width="1"/>
<rect x="42" y="748.5" width="608" height="1" fill="#3a4e6a" />
<rect x="42" y="880.5" width="608" height="2" fill="#384a66" />
<path d="M41 824.5H651M44.5 818.6V829.2M46.5 821.1V827.0M48.5 821.8V826.4M50.5 823.2V825.5M52.5 823.5V825.3M82.5 820.8V827.4M84.5 818.8V828.7M86.5 821.4V826.7M88.5 822.9V825.6M90.5 823.5V825.3M121.5 819.8V828.2M123.5 820.8V827.3M125.5 821.7V826.4M127.5 823.0V825.6M129.5 823.5V825.3M160.5 819.6V828.4M162.5 819.5V828.3M164.5 821.9V826.3M166.5 822.9V825.7M168.5 823.5V825.3M199.5 821.0V827.3M201.5 819.8V828.0M203.5 821.8V826.4M205.5 823.5V825.3M207.5 823.5V825.3M239.5 820.7V827.5M241.5 820.1V827.8M243.5 822.3V826.1M245.5 823.2V825.5M247.5 823.5V825.3M276.5 820.3V827.8M278.5 821.3V826.9M280.5 822.3V826.0M282.5 823.2V825.4M284.5 823.5V825.3M316.5 818.4V829.4M318.5 820.0V827.9M320.5 822.4V826.0M322.5 823.4V825.3M324.5 823.5V825.3M349.5 819.5V828.5M351.5 819.5V828.2M353.5 821.9V826.3M355.5 823.4V825.3M357.5 823.5V825.3M388.5 820.8V827.5M390.5 821.0V827.1M392.5 821.5V826.6M394.5 823.1V825.5M396.5 823.5V825.3M428.5 819.0V828.9M430.5 820.8V827.3M432.5 822.2V826.1M434.5 823.2V825.4M436.5 823.5V825.3M467.5 821.1V827.3M469.5 819.2V828.5M471.5 822.3V826.0M473.5 823.2V825.4M475.5 823.5V825.3M506.5 820.7V827.6M508.5 820.7V827.4M510.5 822.5V825.9M512.5 823.5V825.3M514.5 823.5V825.3M544.5 821.3V827.1M546.5 820.7V827.3M548.5 822.5V825.9M550.5 823.3V825.4M552.5 823.5V825.3M582.5 820.2V828.0M584.5 821.0V827.1M586.5 822.0V826.3M588.5 823.3V825.4M590.5 823.5V825.3M622.5 819.8V828.3M624.5 819.9V828.0M626.5 822.3V826.1M628.5 823.2V825.4M630.5 823.5V825.3" stroke="#a9c6ea" stroke-width="1" fill="none"/>
<path d="M45.5 822.4V826.1M47.5 822.7V826.0M49.5 823.4V825.4M53.5 824.5H57.5M83.5 822.4V826.2M85.5 822.5V826.1M87.5 823.4V825.4M91.5 824.5H95.5M122.5 822.4V826.2M124.5 822.9V825.8M126.5 823.6V825.2M130.5 824.5H134.5M161.5 822.2V826.3M163.5 822.3V826.2M165.5 823.5V825.3M169.5 824.5H173.5M200.5 822.4V826.2M202.5 822.5V826.1M204.5 823.4V825.4M208.5 824.5H212.5M240.5 822.0V826.5M242.5 822.6V826.0M244.5 823.5V825.3M248.5 824.5H252.5M277.5 822.7V825.9M279.5 823.1V825.6M281.5 823.5V825.3M285.5 824.5H289.5M317.5 822.1V826.4M319.5 822.8V825.8M321.5 823.6V825.2M325.5 824.5H329.5M350.5 822.4V826.1M352.5 822.7V825.9M354.5 823.6V825.3M358.5 824.5H362.5M389.5 822.2V826.4M391.5 822.2V826.3M393.5 823.4V825.4M397.5 824.5H401.5M429.5 822.0V826.5M431.5 823.2V825.6M433.5 823.6V825.2M437.5 824.5H441.5M468.5 822.6V826.0M470.5 822.7V825.9M472.5 823.4V825.4M476.5 824.5H480.5M507.5 822.4V826.2M509.5 822.8V825.8M511.5 823.7V825.1M515.5 824.5H519.5M545.5 822.9V825.8M547.5 823.2V825.5M549.5 823.7V825.2M553.5 824.5H557.5M583.5 821.8V826.7M585.5 822.8V825.8M587.5 823.4V825.3M591.5 824.5H595.5M623.5 822.7V825.9M625.5 822.5V826.1M627.5 823.6V825.3M631.5 824.5H635.5" stroke="#a9c6ea" stroke-width="1" fill="none" opacity="0.5"/>
<text x="45" y="761" font-size="11.62" fill="#e8f0fb" font-weight="normal" stroke="#e8f0fb" stroke-width="0.4">V. Moore - Last Chance_6#02.3</text>
<circle cx="223.5" cy="757" r="4.3" fill="none" stroke="#e4edf9" stroke-width="1.1"/>
<rect x="653" y="886" width="305" height="40" rx="3" fill="#1c7229"/>
<rect x="958" y="886" width="1" height="36" fill="#0a0a0a" />
<rect x="959" y="886" width="30" height="40" rx="3" fill="#1c7229"/>
<text x="658" y="899" font-size="11.62" fill="#dcf6dc" font-weight="normal" stroke="#dcf6dc" stroke-width="0.35">Inst 2</text>
<text x="964" y="899" font-size="11.62" fill="#dcf6dc" font-weight="normal" stroke="#dcf6dc" stroke-width="0.35">I</text>
<rect x="300" y="-6" width="85" height="18" rx="4" fill="#2f2f2f" stroke="#262626" stroke-width="1"/>
<path d="M311 -2 L311 8 L313.5 5.8 L315.5 9.5 L317 8.8 L315 5 L318 5 Z" fill="#f0f0f0"/>
<path d="M328.5 2.5 L331.5 5 L334.5 2.5" stroke="#a0a0a0" stroke-width="1" fill="none"/>
<path d="M357.5 -3 V9.5 M350 2.5 H365" stroke="#f4f4f4" stroke-width="1" fill="none"/>
<path d="M372.5 2.5 L375.5 5 L378.5 2.5" stroke="#a0a0a0" stroke-width="1" fill="none"/>
<text x="600" y="7" font-size="13" fill="#bcbcbc" font-weight="normal" stroke="#bcbcbc" stroke-width="0.2">Snap:</text>
<rect x="639" y="-6" width="126" height="18" rx="4" fill="#2b2b2b" stroke="#242424" stroke-width="1"/>
<text x="649" y="7" font-size="13.3" fill="#ececec" font-weight="normal" stroke="#ececec" stroke-width="0.3">Smart</text>
<path d="M752 1.5 L755.5 -1.5 L759 1.5 M752 4 L755.5 7.5 L759 4" stroke="#b4b4b4" stroke-width="1.1" fill="none"/>
<text x="776" y="7" font-size="13" fill="#bcbcbc" font-weight="normal" stroke="#bcbcbc" stroke-width="0.2">Drag:</text>
<rect x="812" y="-6" width="100" height="18" rx="4" fill="#2b2b2b" stroke="#242424" stroke-width="1"/>
<text x="823" y="7" font-size="13.3" fill="#ececec" font-weight="normal" stroke="#ececec" stroke-width="0.3">X-Fade</text>
<path d="M897 1.5 L900.5 -1.5 L904 1.5 M897 4 L900.5 7.5 L904 4" stroke="#b4b4b4" stroke-width="1.1" fill="none"/>
<rect x="922" y="-6" width="31" height="18" rx="4" fill="#2f2f2f" stroke="#262626" stroke-width="1"/>
<path d="M929.00 2.5V4.5M930.75 2.0V5.0M932.50 1.0V6.0M934.25 1.5V5.5M936.00 0.0V7.0M937.75 -1.0V8.0M939.50 -2.5V9.5M941.25 -1.5V8.5M943.00 0.0V7.0M944.75 1.0V6.0M946.50 2.0V5.0M948.25 2.5V4.5" stroke="#e8e8e8" stroke-width="0.9" fill="none"/>
<rect x="962" y="-6" width="20" height="18" rx="4" fill="#2f2f2f" stroke="#262626" stroke-width="1"/>
<rect x="115.8" y="46" width="1.5" height="876" fill="#f4f4f4" />
<path d="M109.5 36.5 Q109.5 34.5 111.5 34.5 H121.5 Q123.5 34.5 123.5 36.5 V40.5 L116.5 47.5 L109.5 40.5 Z" fill="#e4e4e4" stroke="#141414" stroke-width="0.8"/></svg>
</body></html>
